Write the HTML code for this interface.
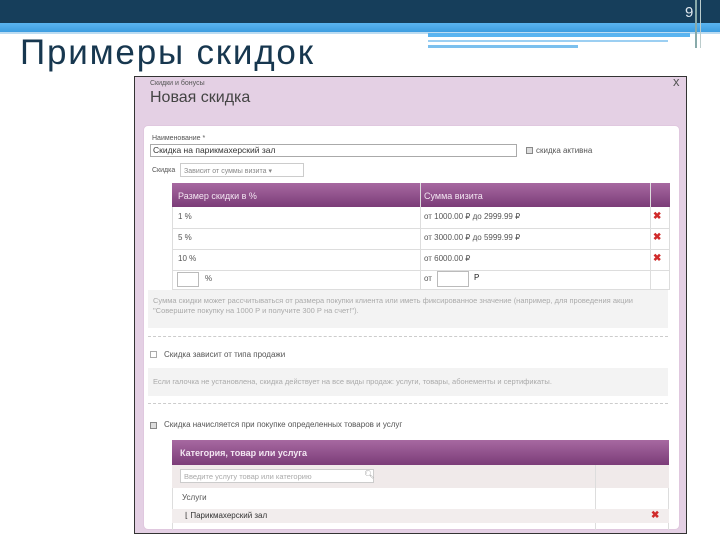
<!DOCTYPE html>
<html><head><meta charset="utf-8"><style>
*{margin:0;padding:0;box-sizing:border-box}
body{width:720px;height:540px;background:#fff;position:relative;overflow:hidden;font-family:"Liberation Sans",sans-serif}
.a{position:absolute}
.s{font-size:8px;color:#555}
.hd{background:linear-gradient(#a769a1,#7b3c78);color:#f3e6f2;font-size:9px}
.x{color:#d02a2a;font-size:10px;font-weight:bold}
.dash{border-top:1px dashed #ccc}
</style></head><body>
<div class="a" style="left:0;top:0;width:720px;height:23px;background:#163e5b"></div>
<div class="a" style="left:0;top:23px;width:720px;height:9px;background:linear-gradient(#5ab4f0,#3d9de0)"></div>
<div class="a" style="left:0;top:32px;width:720px;height:2px;background:#bcdcf2"></div>
<div class="a" style="left:428px;top:33px;width:262px;height:4px;background:#5ab4f0"></div>
<div class="a" style="left:428px;top:40px;width:240px;height:2px;background:#9ccff2"></div>
<div class="a" style="left:428px;top:45px;width:150px;height:3px;background:#7cc0ee"></div>
<div class="a" style="left:695px;top:0;width:2px;height:48px;background:#8aa"></div>
<div class="a" style="left:700px;top:0;width:1px;height:48px;background:#bcc"></div>
<div class="a" style="left:685px;top:4px;color:#dfe8ef;font-size:15px">9</div>
<div class="a" style="left:20px;top:33px;color:#17374f;font-size:35px;letter-spacing:1.8px">Примеры скидок</div>

<div class="a" style="left:134px;top:76px;width:553px;height:458px;background:#e4d0e4;border:1px solid #333"></div>
<div class="a" style="left:673px;top:74px;font-size:13px;color:#555">x</div>
<div class="a s" style="left:150px;top:80px;font-size:7px">Скидки и бонусы</div>
<div class="a" style="left:150px;top:89px;font-size:16px;color:#444">Новая скидка</div>
<div class="a" style="left:143px;top:125px;width:537px;height:405px;background:#fff;border:1px solid #e0c8df;border-radius:5px"></div>
<div class="a s" style="left:152px;top:135px;font-size:7px">Наименование *</div>
<div class="a" style="left:150px;top:144px;width:367px;height:13px;border:1px solid #aaa;font-size:8.5px;color:#333;padding-left:2px;line-height:11px">Скидка на парикмахерский зал</div>
<div class="a" style="left:526px;top:147px;width:7px;height:7px;border:1px solid #888;background:#ddd"></div>
<div class="a s" style="left:536px;top:146px">скидка активна</div>
<div class="a s" style="left:152px;top:167px;font-size:7px">Скидка</div>
<div class="a" style="left:180px;top:163px;width:124px;height:14px;border:1px solid #ccc;font-size:7px;color:#888;padding:3px">Зависит от суммы визита ▾</div>

<div class="a hd" style="left:172px;top:183px;width:498px;height:24px"></div>
<div class="a hd" style="left:178px;top:191px;background:none">Размер скидки в %</div>
<div class="a hd" style="left:424px;top:191px;background:none">Сумма визита</div>
<div class="a" style="left:420px;top:183px;width:1px;height:107px;background:#ddd"></div>
<div class="a" style="left:650px;top:183px;width:1px;height:107px;background:#ddd"></div>
<div class="a" style="left:172px;top:207px;width:498px;height:83px;border:1px solid #ddd;border-top:0"></div>
<div class="a" style="left:172px;top:228px;width:498px;height:1px;background:#ddd"></div>
<div class="a" style="left:172px;top:249px;width:498px;height:1px;background:#ddd"></div>
<div class="a" style="left:172px;top:270px;width:498px;height:1px;background:#ddd"></div>
<div class="a s" style="left:178px;top:212px">1 %</div>
<div class="a s" style="left:178px;top:233px">5 %</div>
<div class="a s" style="left:178px;top:254px">10 %</div>
<div class="a" style="left:177px;top:272px;width:22px;height:15px;border:1px solid #bbb"></div>
<div class="a s" style="left:205px;top:274px">%</div>
<div class="a s" style="left:424px;top:212px">от 1000.00 ₽ до 2999.99 ₽</div>
<div class="a s" style="left:424px;top:233px">от 3000.00 ₽ до 5999.99 ₽</div>
<div class="a s" style="left:424px;top:254px">от 6000.00 ₽</div>
<div class="a s" style="left:424px;top:274px">от</div>
<div class="a" style="left:437px;top:271px;width:32px;height:16px;border:1px solid #bbb"></div>
<div class="a s" style="left:474px;top:273px;color:#222">Р</div>
<div class="a x" style="left:653px;top:211px">✖</div>
<div class="a x" style="left:653px;top:232px">✖</div>
<div class="a x" style="left:653px;top:253px">✖</div>

<div class="a" style="left:148px;top:290px;width:520px;height:38px;background:#f3f3f3;font-size:7.5px;color:#aaa;padding:6px 5px;line-height:10px">Сумма скидки может рассчитываться от размера покупки клиента или иметь фиксированное значение (например, для проведения акции "Совершите покупку на 1000 Р и получите 300 Р на счет!").</div>
<div class="a dash" style="left:148px;top:336px;width:520px"></div>
<div class="a" style="left:150px;top:351px;width:7px;height:7px;border:1px solid #aaa"></div>
<div class="a s" style="left:164px;top:350px">Скидка зависит от типа продажи</div>
<div class="a" style="left:148px;top:368px;width:520px;height:28px;background:#f3f3f3;font-size:7.5px;color:#aaa;padding:9px 5px">Если галочка не установлена, скидка действует на все виды продаж: услуги, товары, абонементы и сертификаты.</div>
<div class="a dash" style="left:148px;top:403px;width:520px"></div>
<div class="a" style="left:150px;top:422px;width:7px;height:7px;border:1px solid #888;background:#ddd"></div>
<div class="a s" style="left:164px;top:420px">Скидка начисляется при покупке определенных товаров и услуг</div>

<div class="a hd" style="left:172px;top:440px;width:497px;height:25px;padding:8px 8px;font-weight:bold">Категория, товар или услуга</div>
<div class="a" style="left:172px;top:465px;width:497px;height:23px;background:#f0eaea"></div>
<div class="a" style="left:180px;top:469px;width:194px;height:14px;border:1px solid #ccc;background:#fff;font-size:7.5px;color:#aaa;padding:2px 3px">Введите услугу товар или категорию</div>
<div class="a" style="left:364px;top:470px;font-size:8px;color:#999">🔍︎</div>
<div class="a" style="left:172px;top:488px;width:497px;height:42px;border-left:1px solid #ddd;border-right:1px solid #ddd"></div>
<div class="a" style="left:595px;top:465px;width:1px;height:65px;background:#ddd"></div>
<div class="a s" style="left:182px;top:493px">Услуги</div>
<div class="a" style="left:172px;top:509px;width:497px;height:14px;background:#f2eded"></div>
<div class="a s" style="left:185px;top:511px;color:#333">⌊ Парикмахерский зал</div>
<div class="a x" style="left:651px;top:510px">✖</div>
</body></html>
